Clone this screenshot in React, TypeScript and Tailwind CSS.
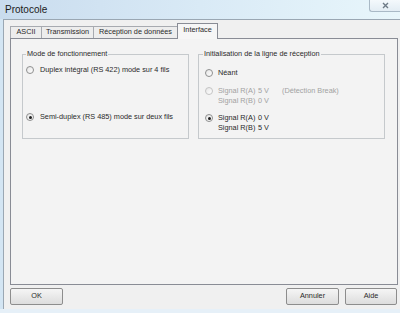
import React from 'react';

const font = { fontFamily: '"Liberation Sans", Arial, sans-serif' };

interface RadioProps {
  checked?: boolean;
  disabled?: boolean;
}

const Radio: React.FC<RadioProps> = ({ checked = false, disabled = false }) => (
  <span
    className={[
      'flex h-[8px] w-[8px] shrink-0 items-center justify-center rounded-full border bg-gradient-to-br from-[#e6e6e6] to-[#ffffff]',
      disabled ? 'border-[#c4c4c4]' : 'border-[#8e8f8f]',
    ].join(' ')}
  >
    {checked && <span className="h-[3px] w-[3px] rounded-full bg-[#1f1f1f]" />}
  </span>
);

// tab label + width measured off the screenshot
const tabs: [string, string][] = [
  ['ASCII', 'w-[31px]'],
  ['Transmission', 'w-[52px]'],
  ['Réception de données', 'w-[84px]'],
  ['Interface', 'w-[41px]'],
];

const Btn: React.FC<{ label: string; w: string }> = ({ label, w }) => (
  <button
    className={[
      'flex h-[17px] items-center justify-center rounded-[2px] border border-[#8d8d8d] bg-gradient-to-b from-[#f5f5f5] to-[#dddddd] text-[7.3px] text-[#2a2a2a]',
      w,
    ].join(' ')}
  >
    {label}
  </button>
);

export default function App() {
  return (
    <div
      className="flex h-[313px] w-[400px] flex-col overflow-hidden bg-[#d3e5f3]"
      style={font}
    >
      {/* Title bar */}
      <div className="relative flex h-[19px] shrink-0 items-center bg-gradient-to-r from-[#c9dcee] via-[#d9eaf6] to-[#e8f6fb] pl-[5px]">
        <span className="text-[10px] text-[#1b1b1b]">Protocole</span>
        <div className="absolute right-0 top-0 flex h-[12px] w-[31px] items-center justify-center rounded-bl-[3px] border-b border-l border-[#a9b9c6] bg-gradient-to-b from-[#f4f9fc] to-[#e3edf4]">
          <svg width="7" height="7" viewBox="0 0 7 7">
            <path d="M1 1 L6 6 M6 1 L1 6" stroke="#6d7a86" strokeWidth="1.4" />
          </svg>
        </div>
      </div>

      {/* Body */}
      <div className="ml-[3px] flex flex-1 flex-col border-l border-t border-[#9aa7b3] bg-[#f0f0f0] pt-[3px] pb-[4px]">
        {/* Tabs */}
        <div className="ml-[6px] flex h-[15px] items-end whitespace-nowrap text-[7.3px] text-[#2a2a2a]">
          {tabs.map(([t, w], i) => {
            const active = i === tabs.length - 1;
            return (
              <div
                key={t}
                className={[
                  w,
                  active
                    ? 'relative z-10 -mb-px flex h-[16px] items-center justify-center border-x border-t border-[#898c95] bg-[#f6f6f6] pb-[2px]'
                    : 'flex h-[12px] items-center justify-center border-l border-t border-[#a7aab0] bg-[#ededed]',
                ].join(' ')}
              >
                {t}
              </div>
            );
          })}
        </div>

        {/* Panel */}
        <div className="ml-[6px] flex h-[247px] w-[388px] gap-[9px] whitespace-nowrap border border-[#898c95] bg-[#f3f3f3] pl-[11px] pt-[10px] text-[7.3px] text-[#2a2a2a]">
          <fieldset className="h-[90px] w-[167px] border border-[#c5c9cc] pl-[3px]">
            <legend className="px-[1px] leading-[10px]">Mode de fonctionnement</legend>
            <div className="flex flex-col gap-[37px] pt-[6px]">
              <label className="flex h-[10px] items-center gap-[6px]">
                <Radio />
                <span>Duplex intégral (RS 422) mode sur 4 fils</span>
              </label>
              <label className="flex h-[10px] items-center gap-[6px]">
                <Radio checked />
                <span>Semi-duplex (RS 485) mode sur deux fils</span>
              </label>
            </div>
          </fieldset>

          <fieldset className="h-[90px] w-[187px] border border-[#c5c9cc] pl-[6px]">
            <legend className="-ml-[2px] px-[1px] leading-[10px]">Initialisation de la ligne de réception</legend>
            <div className="flex flex-col pt-[9px]">
              <label className="flex h-[10px] items-center gap-[5px]">
                <Radio />
                <span>Néant</span>
              </label>
              <label className="mt-[8px] flex items-start gap-[5px] text-[#a2a2a2]">
                <span className="flex h-[10px] items-center">
                  <Radio disabled />
                </span>
                <span className="flex flex-col leading-[10px]">
                  <span className="flex">
                    <span className="w-[40px]">Signal R(A)</span>
                    <span className="w-[24px]">5 V</span>
                    <span>(Détection Break)</span>
                  </span>
                  <span className="flex">
                    <span className="w-[40px]">Signal R(B)</span>
                    <span>0 V</span>
                  </span>
                </span>
              </label>
              <label className="mt-[7px] flex items-start gap-[5px]">
                <span className="flex h-[10px] items-center">
                  <Radio checked />
                </span>
                <span className="flex flex-col leading-[10px]">
                  <span className="flex">
                    <span className="w-[40px]">Signal R(A)</span>
                    <span>0 V</span>
                  </span>
                  <span className="flex">
                    <span className="w-[40px]">Signal R(B)</span>
                    <span>5 V</span>
                  </span>
                </span>
              </label>
            </div>
          </fieldset>
        </div>

        {/* Buttons */}
        <div className="mt-[3px] flex pl-[6px] pr-[3px]">
          <Btn label="OK" w="w-[53px]" />
          <div className="flex-1" />
          <div className="flex gap-[6px]">
            <Btn label="Annuler" w="w-[53px]" />
            <Btn label="Aide" w="w-[52px]" />
          </div>
        </div>
      </div>

      {/* Window frame bottom */}
      <div className="h-[6px] shrink-0 bg-[#e6f0f8]" />
    </div>
  );
}
